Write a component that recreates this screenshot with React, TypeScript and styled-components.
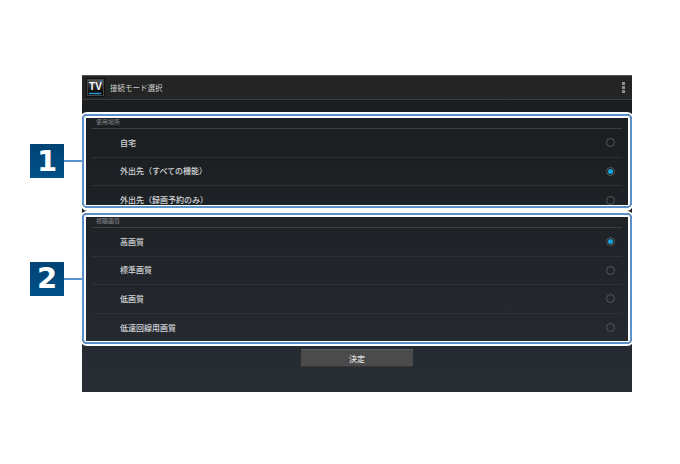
import styled, { createGlobalStyle } from 'styled-components';

const GlobalStyle = createGlobalStyle`
  html, body {
    margin: 0;
    padding: 0;
    background: #ffffff;
  }
  body {
    font-family: "Noto Sans CJK JP", "Liberation Sans", sans-serif;
  }
`;

const Page = styled.div`
  width: 680px;
  height: 464px;
  padding: 75px 48px 0 82px;
  box-sizing: border-box;
`;

const Screen = styled.div`
  width: 550px;
  height: 317px;
  display: flex;
  flex-direction: column;
  background: linear-gradient(#191d20 0%, #1d2125 35%, #282c34 100%);
`;

const ActionBar = styled.div`
  height: 25px;
  box-sizing: border-box;
  display: flex;
  align-items: center;
  padding: 0 7px 0 5px;
  background: #242424;
  border-top: 1px solid #555555;
  border-bottom: 1px solid #3c3c3c;
`;

const AppIcon = styled.div`
  position: relative;
  width: 17px;
  height: 17px;
  flex: none;
  box-sizing: border-box;
  border: 1px solid #454545;
  box-shadow: 0 0 0 1px #111111;
  background: linear-gradient(#505050, #0a0a0a 75%);
  color: #ffffff;
  font-family: "Liberation Sans", sans-serif;
  font-size: 10px;
  font-weight: 700;
  line-height: 13px;
  text-align: center;
  &::after {
    content: '';
    position: absolute;
    left: 1px;
    right: 2px;
    bottom: 1px;
    height: 1px;
    background: #2f9be0;
    box-shadow: 0 0 2px #2f9be0;
  }
  &::before {
    content: '+';
    position: absolute;
    right: 0;
    top: -2px;
    font-size: 6px;
    line-height: 6px;
    color: #2f8fe0;
  }
`;

const Title = styled.div`
  margin-left: 6px;
  flex: 1;
  font-size: 7.5px;
  color: #cfcfcf;
`;

const OverflowMenu = styled.div`
  display: flex;
  flex-direction: column;
  gap: 1px;
`;

const MenuDot = styled.span`
  display: block;
  width: 3px;
  height: 3px;
  background: #8f8f8f;
`;

const Content = styled.div`
  flex: 1;
  display: flex;
  flex-direction: column;
  gap: 5px;
  padding-top: 14px;
`;

const Section = styled.section<{ $height: number }>`
  position: relative;
  height: ${({ $height }) => $height}px;
  box-sizing: border-box;
  border: 2px solid #5b91cb;
  border-radius: 5px;
  box-shadow: 0 0 0 2px #ffffff;
  &:first-child {
    box-shadow: 0 0 0 2px #ffffff, 0 3px 0 0 #ffffff;
  }
`;

const SectionInner = styled.div`
  height: 100%;
  overflow: hidden;
  padding: 0 6px;
  box-sizing: border-box;
  border-style: solid;
  border-color: #ffffff;
  border-width: 2px 2px 1px;
  border-radius: 2px;
`;

const Callout = styled.div`
  position: absolute;
  left: -54px;
  top: 50%;
  transform: translateY(-50%);
  display: flex;
  align-items: center;
`;

const Badge = styled.div`
  width: 34px;
  height: 34px;
  display: flex;
  align-items: center;
  justify-content: center;
  background: linear-gradient(#004274, #005189);
  color: #ffffff;
  font-family: "DejaVu Sans", sans-serif;
  font-size: 29px;
  font-weight: 700;
  line-height: 1;
`;

const Connector = styled.div`
  width: 18px;
  height: 2px;
  background: #5b91cb;
`;

const SectionHeader = styled.div`
  height: 11px;
  box-sizing: border-box;
  padding-left: 4px;
  border-bottom: 1px solid #3d4042;
  font-size: 6px;
  line-height: 7px;
  color: #8b8e90;
`;

const Row = styled.div`
  height: 28.5px;
  box-sizing: border-box;
  display: flex;
  align-items: center;
  padding: 0 7.5px 0 28px;
  border-bottom: 1px solid #2e3235;
  font-size: 8px;
  font-weight: 500;
  line-height: 1;
  color: #d4d6d7;
  &:last-child {
    border-bottom: none;
  }
`;

const RowLabel = styled.span`
  flex: 1;
`;

const Radio = styled.span<{ $checked?: boolean }>`
  width: 9px;
  height: 9px;
  box-sizing: border-box;
  border-radius: 50%;
  border: 1px solid #55595c;
  display: flex;
  align-items: center;
  justify-content: center;
  &::after {
    content: '';
    display: ${({ $checked }) => ($checked ? 'block' : 'none')};
    width: 5px;
    height: 5px;
    border-radius: 50%;
    background: #14a5e0;
  }
`;

const Footer = styled.div`
  display: flex;
  justify-content: center;
`;

const SubmitButton = styled.button`
  width: 112px;
  height: 18px;
  padding: 0;
  border: none;
  border-top: 1px solid #5a5a5a;
  border-bottom: 1px solid #363636;
  background: #4b4b4b;
  color: #e0e0e0;
  font-family: inherit;
  font-size: 8px;
  font-weight: 500;
`;

type Option = { label: string; checked?: boolean };

const locations: Option[] = [
  { label: '自宅' },
  { label: '外出先（すべての機能）', checked: true },
  { label: '外出先（録画予約のみ）' },
];

const qualities: Option[] = [
  { label: '高画質', checked: true },
  { label: '標準画質' },
  { label: '低画質' },
  { label: '低速回線用画質' },
];

function OptionSection(props: { num: number; height: number; title: string; options: Option[] }) {
  return (
    <Section $height={props.height}>
      <Callout>
        <Badge>{props.num}</Badge>
        <Connector />
      </Callout>
      <SectionInner>
        <SectionHeader>{props.title}</SectionHeader>
        {props.options.map((o) => (
          <Row key={o.label}>
            <RowLabel>{o.label}</RowLabel>
            <Radio $checked={o.checked} />
          </Row>
        ))}
      </SectionInner>
    </Section>
  );
}

export default function App() {
  return (
    <Page>
      <GlobalStyle />
      <Screen>
        <ActionBar>
          <AppIcon>TV</AppIcon>
          <Title>接続モード選択</Title>
          <OverflowMenu>
            <MenuDot />
            <MenuDot />
            <MenuDot />
          </OverflowMenu>
        </ActionBar>
        <Content>
          <OptionSection num={1} height={94} title="使用場所" options={locations} />
          <OptionSection num={2} height={131} title="視聴画質" options={qualities} />
          <Footer>
            <SubmitButton>決定</SubmitButton>
          </Footer>
        </Content>
      </Screen>
    </Page>
  );
}
